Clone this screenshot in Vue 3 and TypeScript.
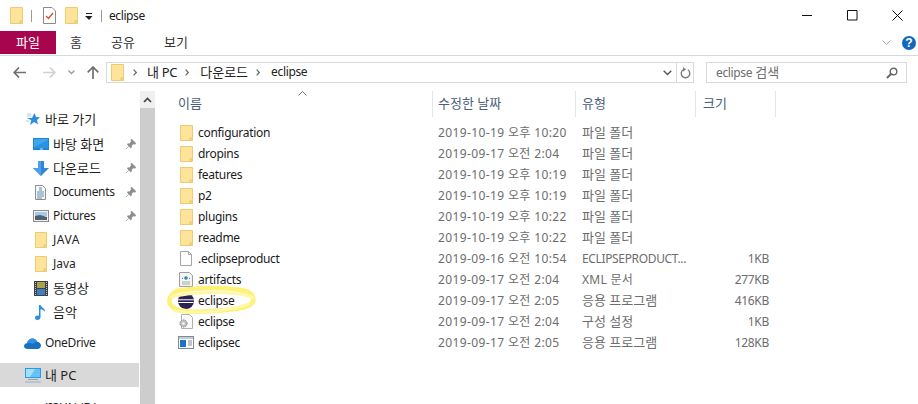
<script setup lang="ts">
interface FileRow { name: string; date: string; type: string; size: string; icon: string; typeCls: string }
interface NavRow { label: string; icon: string; pin?: boolean; cls: string }

const folder = (name: string, date: string): FileRow =>
  ({ name, date, type: '파일 폴더', size: '', icon: 'folder', typeCls: 'ko' })

const files: FileRow[] = [
  folder('configuration', '2019-10-19 오후 10:20'),
  folder('dropins', '2019-09-17 오전 2:04'),
  folder('features', '2019-10-19 오후 10:19'),
  folder('p2', '2019-10-19 오후 10:19'),
  folder('plugins', '2019-10-19 오후 10:22'),
  folder('readme', '2019-10-19 오후 10:22'),
  { name: '.eclipseproduct', date: '2019-09-16 오전 10:54', type: 'ECLIPSEPRODUCT...', size: '1KB', icon: 'blank', typeCls: 'lat' },
  { name: 'artifacts', date: '2019-09-17 오전 2:04', type: 'XML 문서', size: '277KB', icon: 'xml', typeCls: 'mix' },
  { name: 'eclipse', date: '2019-09-17 오전 2:05', type: '응용 프로그램', size: '416KB', icon: 'eclipse', typeCls: 'ko' },
  { name: 'eclipse', date: '2019-09-17 오전 2:04', type: '구성 설정', size: '1KB', icon: 'config', typeCls: 'ko' },
  { name: 'eclipsec', date: '2019-09-17 오전 2:05', type: '응용 프로그램', size: '128KB', icon: 'app', typeCls: 'ko' }
]

const nav: NavRow[] = [
  { label: '바로 가기', icon: 'star', cls: 'lvl0 first ko' },
  { label: '바탕 화면', icon: 'desktop', pin: true, cls: 'lvl1 ko' },
  { label: '다운로드', icon: 'download', pin: true, cls: 'lvl1 ko' },
  { label: 'Documents', icon: 'docs', pin: true, cls: 'lvl1 lat' },
  { label: 'Pictures', icon: 'pics', pin: true, cls: 'lvl1 lat' },
  { label: 'JAVA', icon: 'folder', cls: 'lvl1 caps' },
  { label: 'Java', icon: 'folder', cls: 'lvl1' },
  { label: '동영상', icon: 'video', cls: 'lvl1 ko' },
  { label: '음악', icon: 'music', cls: 'lvl1 ko' },
  { label: 'OneDrive', icon: 'cloud', cls: 'lvl0 lat drive' },
  { label: '내 PC', icon: 'pc', cls: 'lvl0 pc-row selected ko' },
  { label: 'JISUN (E:)', icon: 'none', cls: 'lvl0 gap' }
]
</script>

<template>
  <div class="window">
    <div class="titlebar">
      <svg class="ico" width="13" height="17" viewBox="0 0 13 17"><path d="M.5.500h12v13.500H10v2.500H.500z" fill="#fde49a" stroke="#eccb73"/><path d="M10 14h2.500v2.500H10z" fill="#f5d67f" stroke="#eccb73"/></svg>
      <span class="sep"></span>
      <svg class="ico" width="13" height="17" viewBox="0 0 13 17"><path d="M.5.500H9L12.500 4v12.500H.500z" fill="#fff" stroke="#8a8a8a"/><path d="M3 9l2.500 2.500L10 6" fill="none" stroke="#d8502a" stroke-width="1.400"/></svg>
      <svg class="ico folder-t2" width="13" height="17" viewBox="0 0 13 17"><path d="M.5.500h12v13.500H10v2.500H.500z" fill="#fde49a" stroke="#eccb73"/><path d="M10 14h2.500v2.500H10z" fill="#f5d67f" stroke="#eccb73"/></svg>
      <svg class="ico qa" width="8" height="8" viewBox="0 0 8 8"><path d="M1 0h6v1H1zM0 3h7.500L4 7z" fill="#222"/></svg>
      <span class="sep sep2"></span>
      <span class="title">eclipse</span>
      <div class="caption">
        <svg width="11" height="11" viewBox="0 0 11 11"><path d="M0 5.500h10" stroke="#111"/></svg>
        <svg width="11" height="11" viewBox="0 0 11 11"><path d="M.5.500h9.500V10H.500z" fill="none" stroke="#111"/></svg>
        <svg width="11" height="11" viewBox="0 0 11 11"><path d="M.5.500l10 10M10.500.500l-10 10" stroke="#111" fill="none"/></svg>
      </div>
    </div>

    <div class="ribbon">
      <div class="tab file">파일</div>
      <div class="tab t1">홈</div>
      <div class="tab t2">공유</div>
      <div class="tab t3">보기</div>
      <div class="ribbon-right">
        <svg width="9" height="6" viewBox="0 0 9 6"><path d="M.5.500l4 4 4-4" fill="none" stroke="#a8a8a8"/></svg>
        <svg width="14" height="14" viewBox="0 0 14 14"><circle cx="7" cy="7" r="7" fill="#1268bd"/><text x="7" y="11" text-anchor="middle" class="help">?</text></svg>
      </div>
    </div>

    <div class="addressbar">
      <div class="navbtns">
        <svg width="13" height="11" viewBox="0 0 13 11"><path d="M6 .5L1.200 5.500 6 10.500M1.200 5.500H13" fill="none" stroke="#6f6f6f" stroke-width="1.700"/></svg>
        <svg width="13" height="11" viewBox="0 0 13 11"><path d="M7 .5l4.800 5L7 10.500M11.800 5.500H0" fill="none" stroke="#d2d2d2" stroke-width="1.700"/></svg>
        <svg width="7" height="5" viewBox="0 0 7 5"><path d="M.5.500l3 3 3-3" fill="none" stroke="#9a9a9a" stroke-width="1.300"/></svg>
        <svg width="12" height="13" viewBox="0 0 12 13"><path d="M.7 6.300L6 1l5.300 5.300M6 1v12" fill="none" stroke="#6f6f6f" stroke-width="1.700"/></svg>
      </div>
      <div class="path">
        <svg class="path-folder" width="13" height="17" viewBox="0 0 13 17"><path d="M.5.500h12v13.500H10v2.500H.500z" fill="#fde49a" stroke="#eccb73"/><path d="M10 14h2.500v2.500H10z" fill="#f5d67f" stroke="#eccb73"/></svg>
        <svg class="crumb-sep" width="4" height="7" viewBox="0 0 4 7"><path d="M.6.600l2.700 2.900L.6 6.400" fill="none" stroke="#6a6a6a" stroke-width="1.200"/></svg>
        <span class="crumb ko-text pc-crumb">내 PC</span>
        <svg class="crumb-sep" width="4" height="7" viewBox="0 0 4 7"><path d="M.6.600l2.700 2.900L.6 6.400" fill="none" stroke="#6a6a6a" stroke-width="1.200"/></svg>
        <span class="crumb ko-text">다운로드</span>
        <svg class="crumb-sep" width="4" height="7" viewBox="0 0 4 7"><path d="M.6.600l2.700 2.900L.6 6.400" fill="none" stroke="#6a6a6a" stroke-width="1.200"/></svg>
        <span class="crumb lat-text">eclipse</span>
        <div class="path-end">
          <svg width="9" height="6" viewBox="0 0 9 6"><path d="M.7.700l3.800 3.800L8.300.700" fill="none" stroke="#555" stroke-width="1.400"/></svg>
          <span class="refresh">
            <svg width="11" height="12" viewBox="0 0 11 12"><path d="M7.800 2.800A4.300 4.300 0 1 1 3.200 2.800" fill="none" stroke="#777" stroke-width="1.300"/><path d="M3 0l3 2.600L3 4.500z" fill="#777"/></svg>
          </span>
        </div>
      </div>
      <div class="search">
        <span><span class="lat-text">eclipse</span> <span class="ko-text">검색</span></span>
        <svg width="12" height="12" viewBox="0 0 12 12"><circle cx="7.500" cy="4.500" r="3.300" fill="none" stroke="#666" stroke-width="1.400"/><path d="M5 7L1 11" stroke="#666" stroke-width="2"/></svg>
      </div>
    </div>

    <div class="main">
      <aside class="nav">
        <div v-for="item in nav" :key="item.label" class="nav-row" :class="item.cls">
          <span class="nav-icon">
            <svg v-if="item.icon === 'star'" width="14" height="13" viewBox="0 0 14 13"><path d="M8.500 0l1.500 4 4 .3-3 2.700 1 4.500-3.800-2.500-4.200 3 1.300-4.800L1 5h5z" fill="#2f8be0"/><path d="M1 3h4M0 8h3M1 1h4" stroke="#9ccbf0"/></svg>
            <svg v-else-if="item.icon === 'desktop'" width="16" height="12" viewBox="0 0 16 12"><rect width="16" height="12" fill="#1a86d8"/><rect x="1" y="1" width="14" height="9" fill="#3fa6ee"/><path d="M1 9L15 2v8H1z" fill="#2893e3"/><path d="M7 11h3" stroke="#bfe0f7"/></svg>
            <svg v-else-if="item.icon === 'download'" width="16" height="15" viewBox="0 0 16 15"><path d="M5 0h6v7h5l-8 8-8-8h5z" fill="#2f87d6"/><path d="M5 0h3v15L0 7h5z" fill="#4c9fe6"/></svg>
            <svg v-else-if="item.icon === 'docs'" width="11" height="15" viewBox="0 0 11 15"><path d="M.5.500h7l3 3v11H.500z" fill="#f7f7f7" stroke="#8d8d8d"/><path d="M4 3h3M4 5h3M2 7h7M2 9h7M2 11h7M2 13h5" stroke="#5d8fb5"/></svg>
            <svg v-else-if="item.icon === 'pics'" width="16" height="12" viewBox="0 0 16 12"><rect x=".5" y=".5" width="15" height="11" fill="#f3f3f3" stroke="#8b8b8b"/><rect x="2" y="2" width="12" height="4" fill="#a9c8e2"/><path d="M2 6l5-1 7 2v3H2z" fill="#4d6270"/></svg>
            <svg v-else-if="item.icon === 'folder'" width="12" height="16" viewBox="0 0 12 16"><path d="M.5.500h11V13H9v2.500H.500z" fill="#fde49a" stroke="#eccb73"/><path d="M9 13h2.500v2.500H9z" fill="#f5d67f" stroke="#eccb73"/></svg>
            <svg v-else-if="item.icon === 'video'" width="14" height="15" viewBox="0 0 14 15"><rect width="14" height="15" fill="#3a3f48"/><rect x="3" y="1" width="8" height="6" fill="#a9a24a"/><rect x="3" y="8" width="8" height="6" fill="#3f7fc0"/><path d="M1.500 1v13M12.500 1v13" stroke="#c4c4c4" stroke-dasharray="1 1"/></svg>
            <svg v-else-if="item.icon === 'music'" width="11" height="16" viewBox="0 0 11 16"><path d="M4 1h1.500c.5 2.500 5 3 4.500 7-1-2-3-2.500-4.500-2.800V13c0 1.700-1.300 3-3 3C1 16 0 15 0 13.700S1.300 11.500 2.500 11.500c.6 0 1.100.1 1.500.4z" fill="#2b8fdc"/></svg>
            <svg v-else-if="item.icon === 'cloud'" width="17" height="11" viewBox="0 0 17 11"><path d="M3.500 11C1.500 11 0 9.800 0 8.200 0 6.700 1.200 5.500 3 5.300 3.700 2.500 6 .5 8.500.5c2.200 0 4 1.300 4.800 3.200 2 .2 3.700 1.900 3.700 3.800S15.600 11 13.500 11z" fill="#1a6fc2"/><path d="M3 5.300C3.700 2.500 6 .5 8.500.5c2.200 0 4 1.300 4.800 3.200-2.200 0-3.500 1-4.300 2.300C7 4.800 5 4.700 3 5.300z" fill="#2f93e2"/></svg>
            <svg v-else-if="item.icon === 'pc'" width="16" height="15" viewBox="0 0 16 15"><rect width="16" height="10" fill="#2d9ae6"/><path d="M1 1h14v8H1z" fill="#66c2f7"/><path d="M1 1h9L5 9H1z" fill="#a5dffb"/><path d="M3 11h10v1H3z" fill="#8fa6b8"/><path d="M0 14h16" stroke="#9ab0c2"/></svg>
          </span>
          <span class="nav-label">{{ item.label }}</span>
          <svg v-if="item.pin" class="pin" width="10" height="10" viewBox="0 0 10 10"><path d="M5.500 0L10 4.500 8.800 5.200 7.500 4.800 5.500 6.800 5.500 8.500 4.500 8.800 1.500 5.800 1.800 4.700 3.500 4.700 5.300 2.500 5 1.200zM3 7L0 10" fill="#8c8c8c" stroke="#8c8c8c" stroke-width=".6"/></svg>
        </div>
      </aside>

      <div class="scrollbar">
        <div class="scroll-arrow">
          <svg width="9" height="6" viewBox="0 0 9 6"><path d="M1 5l3.500-3.500L8 5" fill="none" stroke="#444" stroke-width="1.700"/></svg>
        </div>
        <div class="scroll-thumb"></div>
      </div>

      <section class="list">
        <svg class="sort" width="9" height="5" viewBox="0 0 9 5"><path d="M.5 4.500l4-4 4 4" fill="none" stroke="#777"/></svg>
        <div class="head">
          <div class="c-name">이름</div>
          <div class="c-date">수정한 날짜</div>
          <div class="c-type">유형</div>
          <div class="c-size head-size">크기</div>
        </div>
        <div class="rows">
          <div v-for="(f, i) in files" :key="i" class="row">
            <div class="c-name name-cell">
              <span class="file-icon">
                <svg v-if="f.icon === 'folder'" class="shift" width="13" height="16" viewBox="0 0 13 16"><path d="M.5.500h12V13H10v2.500H.500z" fill="#fde49a" stroke="#eccb73"/><path d="M10 13h2.500v2.500H10z" fill="#f5d67f" stroke="#eccb73"/></svg>
                <svg v-else-if="f.icon === 'blank'" class="shift" width="12" height="15" viewBox="0 0 12 15"><path d="M.5.500h8l3 3v11H.500z" fill="#fff" stroke="#a5a5a5"/><path d="M8.500.500v3h3" fill="none" stroke="#a5a5a5"/></svg>
                <svg v-else-if="f.icon === 'xml'" class="shift1" width="14" height="15" viewBox="0 0 14 15"><path d="M.5.500h10l3 3v11H.500z" fill="#f4f4f4" stroke="#9e9e9e"/><circle cx="7" cy="6" r="1.800" fill="#2b8aa8"/><path d="M4 6l-1 .8M10 6l1 .8" stroke="#2b8aa8"/><path d="M3 10h8M3 12h8" stroke="#a8a8a8"/></svg>
                <svg v-else-if="f.icon === 'eclipse'" width="16" height="16" viewBox="0 0 16 16"><circle cx="8" cy="8" r="8" fill="#2c2255"/><path d="M.2 6.800h15.600M.4 9.500h15.200" stroke="#fff" stroke-width="1"/><path d="M3 2.500C5 1 11 1 13 2.500" stroke="#5b4c93" fill="none"/></svg>
                <svg v-else-if="f.icon === 'config'" width="15" height="15" viewBox="0 0 15 15"><path d="M3.500.500h8l3 3v11h-11z" fill="#fafafa" stroke="#b0b0b0"/><circle cx="5.500" cy="9.500" r="3.600" fill="#bdbdbd" stroke="#8f8f8f" stroke-dasharray="1.500 .8"/><circle cx="5.500" cy="9.500" r="1.300" fill="#fff"/></svg>
                <svg v-else-if="f.icon === 'app'" width="16" height="13" viewBox="0 0 16 13"><rect x=".5" y=".5" width="15" height="12" fill="#fff" stroke="#7d8a96"/><path d="M1 1h14v2H1z" fill="#c4ccd3"/><rect x="2" y="4" width="6" height="7" fill="#1875c8"/><path d="M10 5h4M10 7h4M10 9h4" stroke="#7d8a96"/></svg>
              </span>
              <span class="fname">{{ f.name }}</span>
            </div>
            <div class="c-date cell date-text">{{ f.date }}</div>
            <div class="c-type cell" :class="f.typeCls">{{ f.type }}</div>
            <div class="c-size cell size-cell">{{ f.size }}</div>
          </div>
        </div>
        <svg class="scribble" width="92" height="30" viewBox="0 0 92 30">
          <path d="M12 5C32 1 66 1 80 5c8 2 10 8 7 12-5 6-22 7-38 8-15 1-32 2-40-3C2 18 3 9 12 5z" fill="none" stroke="#fff176" stroke-width="4.500" stroke-linecap="round"/>
          <path d="M6 11C26 6 64 4 88 11M10 25c22 3 54 0 74-7" fill="none" stroke="#fff8a8" stroke-width="3" stroke-linecap="round"/>
        </svg>
      </section>
    </div>
  </div>
</template>

<style>
html, body { margin: 0; background: #fff; overflow: hidden; }
</style>

<style scoped>
.window {
  width: 918px;
  height: 404px;
  overflow: hidden;
  display: flex;
  flex-direction: column;
  background: #fff;
  color: #1a1a1a;
  font: 12px/16px "Noto Sans", "Noto Sans CJK KR", sans-serif;
}
svg { display: block; flex: none; }
.ko-text, .ko { font-size: 13px; }
.lat-text, .lat { letter-spacing: -.35px; }
.titlebar { height: 31px; display: flex; align-items: center; padding-left: 10px; flex: none; }
.sep { width: 1px; height: 12px; background: #9a9a9a; margin: 0 11px 0 8px; }
.sep2 { margin: 0 7px 0 8px; }
.folder-t2 { margin-left: 9px; }
.qa { margin-left: 7px; margin-top: 3px; }
.title { letter-spacing: -.4px; }
.caption { margin-left: auto; display: flex; gap: 34px; margin-right: 15px; }

.ribbon { height: 24px; display: flex; align-items: flex-start; border-bottom: 1px solid #d9d9d9; flex: none; }
.tab { font-size: 13px; height: 23px; line-height: 23px; text-align: center; color: #333; }
.file { width: 56px; background: #a8054f; color: #fff; }
.t1 { width: 40px; }
.t2 { width: 42px; margin-left: 6px; }
.t3 { width: 42px; margin-left: 11px; }
.ribbon-right { margin-left: auto; display: flex; align-items: center; gap: 11px; margin-right: 2px; height: 23px; }
.help { font: 700 12px "Liberation Sans", sans-serif; fill: #fff; }

.addressbar { height: 33px; display: flex; align-items: center; flex: none; }
.navbtns { width: 106px; display: flex; align-items: center; padding-left: 13px; box-sizing: border-box; }
.navbtns svg:nth-child(2) { margin-left: 17px; }
.navbtns svg:nth-child(3) { margin-left: 12px; }
.navbtns svg:nth-child(4) { margin-left: 12px; }
.path {
  width: 588px; height: 21px; box-sizing: border-box; border: 1px solid #d9d9d9;
  display: flex; align-items: center; padding-left: 4px;
}
.crumb-sep { margin: 0 11px 0 9px; }
.crumb { color: #222; padding-bottom: 1px; }
.pc-crumb { margin-left: -1px; letter-spacing: -.3px; margin-right: -1px; }
.crumb-sep:nth-of-type(4) { margin-left: 8px; }
.path-end { margin-left: auto; display: flex; align-items: center; height: 100%; }
.path-end > svg { margin-right: 4px; }
.refresh { width: 16px; height: 100%; border-left: 1px solid #d9d9d9; display: flex; align-items: center; justify-content: center; }
.search {
  width: 201px; height: 21px; box-sizing: border-box; margin-left: 12px; border: 1px solid #d9d9d9;
  display: flex; align-items: center; justify-content: space-between; padding: 0 8px 0 9px; color: #6d6d6d;
}

.main { flex: 1; min-height: 0; display: flex; }
.nav { width: 140px; flex: none; padding-top: 18px; box-sizing: border-box; }
.nav-row { height: 24px; display: flex; align-items: center; position: relative; color: #1f1f1f; }
.nav-row.ko .nav-label { padding-bottom: 1px; }
.nav-icon { width: 17px; display: flex; justify-content: center; flex: none; }
.lvl0 { padding-left: 24px; }
.lvl0 .nav-label { margin-left: 4px; }
.lvl1 { padding-left: 32px; }
.lvl1 .nav-label { margin-left: 4px; }
.caps .nav-label { letter-spacing: .5px; }
.first { margin-bottom: 1px; }
.drive { margin-top: 7px; }
.pc-row { margin-top: 8px; }
.gap { margin-top: 9px; }
.selected { background: #d9d9d9; margin-right: 1px; }
.pin { position: absolute; left: 126px; top: 7px; }

.scrollbar { width: 15px; flex: none; background: #f0f0f0; display: flex; flex-direction: column; margin: 2px 3px 0 0; }
.scroll-arrow { height: 17px; display: flex; justify-content: center; align-items: center; }
.scroll-thumb { flex: 1; background: #cdcdcd; }

.list { flex: 1; position: relative; min-width: 0; }
.sort { position: absolute; left: 140px; top: 2px; }
.head { height: 26px; display: flex; color: #4c607a; margin-top: 2px; font-size: 13px; }
.head > div { box-sizing: border-box; line-height: 24px; border-right: 1px solid #e5e5e5; }
.c-name { width: 275px; padding-left: 20px; box-sizing: border-box; }
.c-date { width: 143px; padding-left: 5px; box-sizing: border-box; }
.c-type { width: 120px; padding-left: 6px; box-sizing: border-box; }
.c-type.ko { padding-bottom: 1px; }
.c-size { width: 80px; box-sizing: border-box; }
.head-size { padding-left: 7px; }
.rows { padding-top: 5px; }
.row { height: 21px; display: flex; align-items: center; }
.cell { color: #6d6d6d; white-space: nowrap; overflow: hidden; }
.date-text { letter-spacing: .38px; }
.mix { letter-spacing: .3px; }
.size-cell { text-align: right; padding-right: 7px; letter-spacing: -.3px; }
.name-cell { display: flex; align-items: center; padding-left: 20px; }
.file-icon { width: 20px; display: flex; justify-content: flex-start; }
.shift { margin-left: 2px; }
.shift1 { margin-left: 1px; }
.fname { color: #1a1a1a; letter-spacing: -.3px; }
.scribble { position: absolute; left: 7px; top: 197px; pointer-events: none; }
</style>
